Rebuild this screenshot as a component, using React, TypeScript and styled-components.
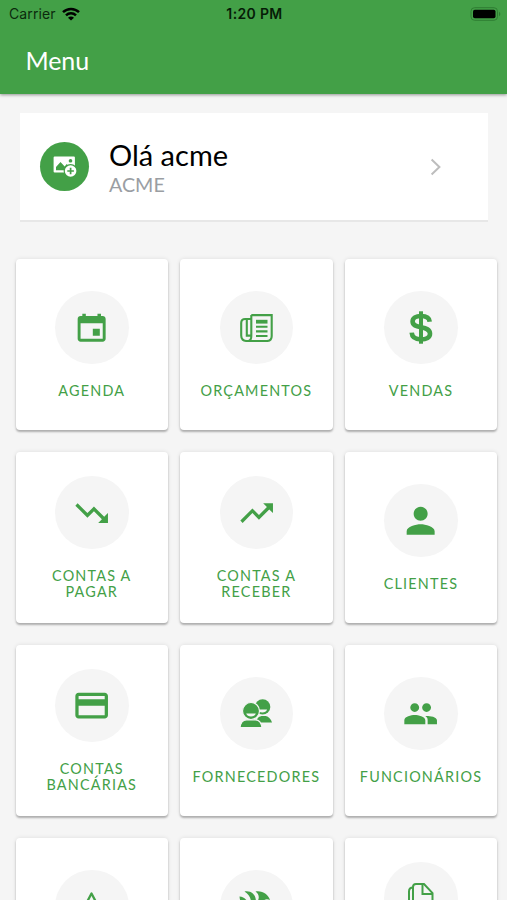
import React from "react";
import styled, { createGlobalStyle } from "styled-components";
import {
  IoMdCalendar,
  IoMdTrendingDown,
  IoMdTrendingUp,
  IoMdPerson,
  IoMdCard,
  IoMdPeople,
} from "react-icons/io";

const GREEN = "#43a047";

const GlobalStyle = createGlobalStyle`
  *, *::before, *::after { box-sizing: border-box; }
  body { margin: 0; background: #f5f5f5; }
`;

const Screen = styled.div`
  width: 507px;
  height: 900px;
  overflow: hidden;
  display: flex;
  flex-direction: column;
  background: #f5f5f5;
  font-family: Lato, "Liberation Sans", sans-serif;
`;

const Header = styled.header`
  flex: none;
  height: 94px;
  background: ${GREEN};
  box-shadow: 0 1px 3px rgba(0, 0, 0, 0.4);
`;

const StatusBar = styled.div`
  display: grid;
  grid-template-columns: 1fr auto 1fr;
  align-items: center;
  height: 27px;
  padding: 0 7px 0 9px;
  color: #0b2a0d;
  font: 400 14px/27px Inter, sans-serif;
`;

const Carrier = styled.div`
  display: flex;
  align-items: center;
  gap: 6px;
  letter-spacing: 0.1px;
`;

const Clock = styled.div`
  color: #061c07;
  font-weight: 600;
  letter-spacing: 0.35px;
`;

const BatterySlot = styled.div`
  display: flex;
  justify-content: flex-end;
  margin-right: -1px;
`;

const Title = styled.h1`
  margin: 0;
  padding-left: 25.5px;
  color: #fff;
  font-size: 25px;
  font-weight: 400;
  line-height: 66px;
  letter-spacing: -0.1px;
`;

const Profile = styled.section`
  flex: none;
  display: flex;
  align-items: center;
  width: 468px;
  height: 109px;
  margin: 19px 0 0 20px;
  padding: 0 46px 0 20px;
  background: #fff;
  border-bottom: 2px solid #e7e7e7;
`;

const Avatar = styled.div`
  display: flex;
  align-items: center;
  justify-content: center;
  width: 49px;
  height: 49px;
  margin-right: 20px;
  border-radius: 50%;
  background: ${GREEN};
`;

const Identity = styled.div`
  flex: 1;
  padding-top: 2px;
`;

const Greeting = styled.div`
  color: #000;
  font-size: 29px;
  line-height: 34px;
`;

const Company = styled.div`
  color: #9a9ea3;
  font-size: 19.7px;
  line-height: 25px;
`;

const Grid = styled.main`
  display: grid;
  grid-template-columns: repeat(3, 152.6px);
  grid-auto-rows: 171px;
  column-gap: 12px;
  row-gap: 22px;
  padding: 37px 0 0 15.5px;
`;

const Card = styled.div`
  display: flex;
  flex-direction: column;
  align-items: center;
  justify-content: center;
  gap: 18px;
  background: #fff;
  border-radius: 4px;
  box-shadow: 0 2px 2px rgba(0, 0, 0, 0.26), 0 0 4px rgba(0, 0, 0, 0.1);
`;

const IconDisc = styled.div`
  display: flex;
  align-items: center;
  justify-content: center;
  width: 73.5px;
  height: 73.5px;
  border-radius: 50%;
  background: #f5f5f5;
  color: ${GREEN};
  font-size: 37.3px;
`;

const Label = styled.div<{ $lines: number }>`
  height: ${(p) => p.$lines * 16}px;
  color: ${GREEN};
  font-size: 14.4px;
  line-height: 16px;
  padding-top: 1px;
  letter-spacing: 1.2px;
  text-align: center;
  white-space: pre-line;
`;

const Wifi = () => (
  <svg width="18" height="14" viewBox="0 0 18 14" fill="none" stroke="#000" strokeWidth="2.5">
    <path d="M1 5.1C5.5.8 12.5.8 17 5.1" />
    <path d="M4 8.3c2.8-2.7 7.2-2.7 10 0" />
    <path d="M9 13.6 6 10.7c1.7-1.5 4.3-1.5 6 0z" fill="#000" stroke="none" />
  </svg>
);

const Battery = () => (
  <svg width="31" height="14" viewBox="0 0 31 14">
    <rect x="1" y="0.7" width="26.5" height="12.6" rx="3.6" fill="none" stroke="#2f7d33" />
    <rect x="3" y="2.7" width="22.5" height="8.6" rx="1.8" fill="#000" />
    <path d="M29 4.8c1.8.7 1.8 3.7 0 4.4z" fill="#2f7d33" />
  </svg>
);

const AddPhoto = () => (
  <svg width="24" height="22" viewBox="0 0 24 22">
    <path
      fill="#fff"
      fillRule="evenodd"
      d="M1.6.5h19.3q1 0 1 1v15H1.600q-1 0-1-1v-14q0-1 1-1zM3 14.200h13v-3.500l-2.300-2.600-2 2.300L7.500 6 3 11zM17.500 3a1.800 1.800 0 1 0 .01 0z"
    />
    <circle cx="17.6" cy="15" r="7" fill={GREEN} />
    <circle cx="17.6" cy="15" r="5.8" fill="#fff" />
    <path d="M17.6 11.7v6.6M14.3 15h6.6" stroke={GREEN} strokeWidth="1.7" />
  </svg>
);

const Chevron = () => (
  <svg width="12" height="18" viewBox="0 0 12 18" fill="none" stroke="#bdbdbd" strokeWidth="2">
    <path d="m1.6 1.6 7.8 7.4-7.8 7.4" />
  </svg>
);

const Newspaper = () => (
  <svg width="33" height="28" viewBox="0 0 33 28" fill="none" stroke="currentColor" strokeWidth="2.1">
    <path d="M11.300 1.100h20.400v20.900q0 5-5 5H7q-5.800 0-5.800-5.500V9q0-4 4-4h6.100" />
    <path d="M11.300 1v21q0 4.600-3 5M6.800 5v16.600h4.500" />
    <path d="M16 7.700h11.500" strokeWidth="3.800" />
    <path d="M16 12.800h11.500M16 17.400h11.500M16 22h11.500" />
  </svg>
);

const Dollar = () => (
  <svg width="24" height="33" viewBox="0 0 24 33" fill="none" stroke="currentColor">
    <path
      d="M20.700 10.700C20.400 7 17 5 12 5c-5 0-8.400 2-8.400 5.500 0 3.800 3.500 4.800 8.400 5.800 5.300 1.100 9 2.200 9 6.400 0 3.700-3.700 5.700-9 5.700-5.500 0-9-2.300-9.300-6.700"
      strokeWidth="4.600"
    />
    <path d="M12 .3v32.400" strokeWidth="4" />
  </svg>
);

const Suppliers = () => (
  <svg width="33" height="29" viewBox="0 0 33 29">
    <g fill="currentColor">
      <circle cx="22.600" cy="7.900" r="7.700" />
      <path d="M16 23.500c1-4.500 3-6.500 6.800-6.500h3c3 .5 5 3 6.200 6.500z" />
    </g>
    <path d="M17.500 10.400h9.600c-1 4-8.600 4-9.600 0z" fill="#f5f5f5" />
    <g fill="currentColor" stroke="#f5f5f5" strokeWidth="1.200">
      <path d="M0 28.600c.5-4.500 3-7.800 6.500-7.800h9c3.500 0 5.800 3.300 6.500 7.800z" />
      <circle cx="11" cy="12" r="8.500" />
    </g>
    <path d="M6.200 14.400h9.600c-1 4-8.600 4-9.600 0z" fill="#f5f5f5" />
  </svg>
);

const Triangle = () => (
  <svg width="33" height="32" viewBox="0 0 33 32" fill="none" stroke="currentColor" strokeWidth="2.300">
    <path d="M16.500 2.500 30.500 29H2.500z" strokeLinejoin="round" />
  </svg>
);

const Feathers = () => (
  <svg width="34" height="34" viewBox="0 0 34 34" fill="currentColor">
    <path d="M5.500 1.500C12 .5 17 4 17 12v18l-5-6V12C12 8 9.500 4 5.500 1.500z" />
    <path d="M16.500 1.500C24 .5 29 4.500 31 10c-3-1.500-5-1-6.500 1L18 30V12c3-4 2-8-1.500-10.500z" />
    <path d="M.5 6.500C4 6.500 7.500 9 9 13l2 10C6 19 1 14 .5 6.500z" />
  </svg>
);

const Documents = () => (
  <svg width="26" height="32" viewBox="0 0 26 32" fill="none" stroke="currentColor" strokeWidth="2">
    <path d="M8 1.100h8l8.500 9v16H5V4q0-3 3-3z" />
    <path d="M14.500 1v10h10M5 4.500Q1 4.500 1 8.500V31h18v-5" />
  </svg>
);

type Item = { icon: React.ReactNode; label?: string; lines?: number };

const items: Item[] = [
  { icon: <IoMdCalendar />, label: "AGENDA" },
  { icon: <Newspaper />, label: "ORÇAMENTOS" },
  { icon: <Dollar />, label: "VENDAS" },
  { icon: <IoMdTrendingDown />, label: "CONTAS A\nPAGAR", lines: 2 },
  { icon: <IoMdTrendingUp />, label: "CONTAS A\nRECEBER", lines: 2 },
  { icon: <IoMdPerson />, label: "CLIENTES" },
  { icon: <IoMdCard />, label: "CONTAS\nBANCÁRIAS", lines: 2 },
  { icon: <Suppliers />, label: "FORNECEDORES" },
  { icon: <IoMdPeople />, label: "FUNCIONÁRIOS" },
  { icon: <Triangle /> },
  { icon: <Feathers /> },
  { icon: <Documents />, lines: 2 },
];

export default function App() {
  return (
    <>
      <GlobalStyle />
      <Screen>
        <Header>
          <StatusBar>
            <Carrier>
              Carrier
              <Wifi />
            </Carrier>
            <Clock>1:20 PM</Clock>
            <BatterySlot>
              <Battery />
            </BatterySlot>
          </StatusBar>
          <Title>Menu</Title>
        </Header>
        <Profile>
          <Avatar>
            <AddPhoto />
          </Avatar>
          <Identity>
            <Greeting>Olá acme</Greeting>
            <Company>ACME</Company>
          </Identity>
          <Chevron />
        </Profile>
        <Grid>
          {items.map(({ icon, label, lines = 1 }, i) => (
            <Card key={i}>
              <IconDisc>{icon}</IconDisc>
              <Label $lines={lines}>{label}</Label>
            </Card>
          ))}
        </Grid>
      </Screen>
    </>
  );
}
